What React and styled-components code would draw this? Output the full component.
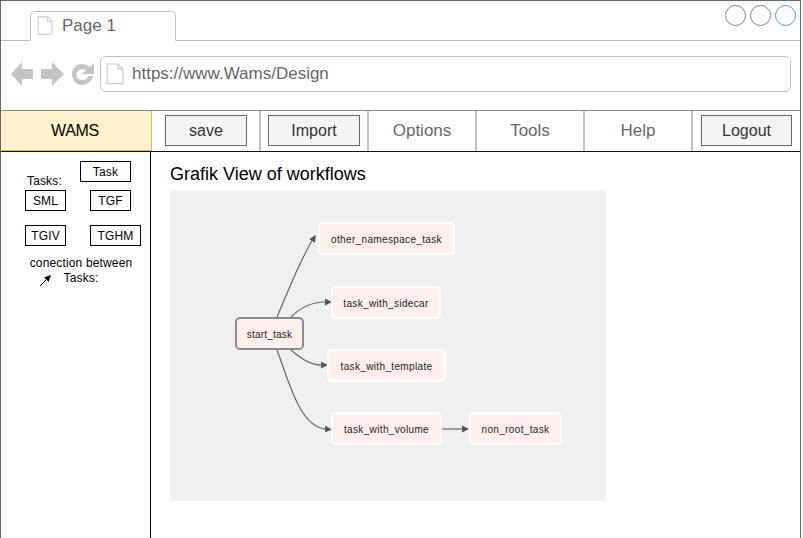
import React from 'react'
import styled, { createGlobalStyle } from 'styled-components'

const GlobalStyle = createGlobalStyle`
  html, body {
    margin: 0;
    padding: 0;
    background: #fff;
    font-family: "Liberation Sans", Arial, sans-serif;
  }
  * {
    box-sizing: border-box;
  }
`

const Frame = styled.div`
  width: 801px;
  height: 538px;
  overflow: hidden;
  display: flex;
  flex-direction: column;
  border: 1px solid #666;
  border-bottom: 0;
`

const TabRow = styled.div`
  height: 40px;
  flex: none;
  display: flex;
  align-items: flex-end;
  justify-content: space-between;
  padding-left: 29px;
  border-bottom: 1px solid #bbb;
`

const Tab = styled.div`
  width: 146px;
  height: 30px;
  margin-bottom: -1px;
  display: flex;
  align-items: center;
  gap: 9px;
  padding-left: 6px;
  font-size: 17px;
  color: #666;
  background: #fff;
  border: 1px solid #c0c0c0;
  border-bottom-color: #fff;
  border-radius: 5px 5px 0 0;
`

const WindowDots = styled.div`
  align-self: flex-start;
  display: flex;
  gap: 4px;
  padding: 4px 4px 0 0;
`

const Dot = styled.span`
  width: 21px;
  height: 21px;
  border-radius: 50%;
  border: 1px solid ${(p) => (p.$active ? '#3a9cf5' : '#808080')};
`

const AddressRow = styled.div`
  height: 69px;
  flex: none;
  display: flex;
  align-items: center;
  padding: 0 9px 3px 10px;
`

const NavIcons = styled.svg`
  width: 89px;
  height: 30px;
  flex: none;
`

const AddressBar = styled.div`
  flex: 1;
  height: 36px;
  display: flex;
  align-items: center;
  gap: 8px;
  padding-left: 5px;
  font-size: 17px;
  color: #666;
  border: 1px solid #c0c0c0;
  border-radius: 6px;
`

const Menu = styled.div`
  height: 42px;
  flex: none;
  display: flex;
  border-top: 1px solid #888;
  border-bottom: 1px solid #111;
`

const Brand = styled.div`
  width: 152px;
  margin-left: -1px;
  padding-right: 2px;
  display: flex;
  align-items: center;
  justify-content: center;
  font-size: 16px;
  letter-spacing: -0.3px;
  color: #000;
  background: #fff2cc;
  border: 1px solid #d6b656;
  border-top: 0;
`

const MenuCell = styled.div`
  width: ${(p) => p.$width}px;
  flex: none;
  display: flex;
  align-items: center;
  justify-content: ${(p) => p.$justify || 'center'};
  padding-left: ${(p) => p.$pad || 0}px;
  font-size: 17px;
  color: #666;
  border-right: ${(p) => (p.$last ? '0' : '2px solid #c0c0c0')};
`

const MenuButton = styled.div`
  width: ${(p) => p.$width}px;
  height: 31px;
  margin-top: -1px;
  display: flex;
  align-items: center;
  justify-content: center;
  font-size: 16px;
  color: #333;
  background: #f5f5f5;
  border: 1px solid #666;
`

const Body = styled.div`
  flex: 1;
  display: flex;
  min-height: 0;
  border-right: 1px solid #111;
  margin-right: -1px;
`

const Sidebar = styled.aside`
  width: 150px;
  flex: none;
  display: flex;
  flex-direction: column;
  padding: 9px 0 0 24px;
  font-size: 12px;
  letter-spacing: 0.15px;
  color: #000;
  border-right: 1px solid #000;
`

const PaletteRow = styled.div`
  display: flex;
  align-items: flex-end;
  margin-bottom: ${(p) => p.$gap || 0}px;
`

const TasksLabel = styled.span`
  width: 53px;
  margin-left: 2px;
  margin-bottom: -6px;
`

const PaletteBox = styled.div`
  width: ${(p) => p.$width || 41}px;
  height: 21px;
  margin-left: ${(p) => p.$offset || 0}px;
  display: flex;
  align-items: center;
  justify-content: center;
  border: 1px solid #000;
`

const ConnectionNote = styled.div`
  position: relative;
  width: 112px;
  margin-top: 10px;
  text-align: center;
  line-height: 15px;
`

const ConnectionArrow = styled.svg`
  position: absolute;
  left: 14px;
  top: 17px;
  width: 14px;
  height: 14px;
`

const Main = styled.main`
  flex: 1;
  padding: 12px 0 0 19px;
`

const Title = styled.h1`
  margin: 0 0 5px;
  font-size: 18px;
  line-height: 21px;
  font-weight: 400;
  color: #000;
`

const Graph = styled.div`
  position: relative;
  width: 436px;
  height: 311px;
  background: #f0f0f0;
`

const Edges = styled.svg`
  position: absolute;
  inset: 0;
  width: 100%;
  height: 100%;
`

const Node = styled.div`
  position: absolute;
  left: ${(p) => p.$x}px;
  top: ${(p) => p.$y}px;
  width: ${(p) => p.$w}px;
  height: 33px;
  padding-top: 1px;
  display: flex;
  align-items: center;
  justify-content: center;
  font-size: 10px;
  letter-spacing: ${(p) => (p.$root ? '0.2px' : '0.35px')};
  color: #222;
  background: #fff0eb;
  border: 2px solid ${(p) => (p.$root ? '#8a8a8a' : '#fff')};
  border-radius: 5px;
`

const nodes = [
  { label: 'other_namespace_task', x: 148, y: 32, w: 137 },
  { label: 'task_with_sidecar', x: 161, y: 96, w: 110 },
  { label: 'start_task', x: 65, y: 127, w: 69, root: true },
  { label: 'task_with_template', x: 157, y: 159, w: 119 },
  { label: 'task_with_volume', x: 161, y: 222, w: 111 },
  { label: 'non_root_task', x: 299, y: 222, w: 93 },
]

const edges = [
  'M107 127 C120 97 130 70 142 51',
  'M121 127 C131 117 143 112 155 112',
  'M121 160 C130 168 141 175 151 175',
  'M107 160 C120 195 130 236 155 239',
  'M272 239 L292 239',
]

const DocIcon = ({ size = 18 }) => (
  <svg width={size} height={size * 1.2} viewBox="0 0 18 22" fill="#fff" stroke="#c8c8c8" strokeWidth="1.2">
    <path d="M1 1 H12 L17 6 V21 H1 Z" />
    <path d="M12 1 V6 H17" fill="none" />
  </svg>
)

export default function App () {
  return (
    <Frame>
      <GlobalStyle />
      <TabRow>
        <Tab>
          <DocIcon size={16} />
          Page 1
        </Tab>
        <WindowDots>
          <Dot />
          <Dot />
          <Dot $active />
        </WindowDots>
      </TabRow>
      <AddressRow>
        <NavIcons viewBox="0 0 89 30" fill="#c4c4c4">
          <path d="M0 15 L11 3 V10 H22 V20 H11 V27 Z" />
          <path d="M53 15 L41 3 V10 H30 V20 H41 V27 Z" />
          <path fillRule="evenodd" d="M71 5 C74 5 77 6 79 8 L83 4 V15 H71 L75 11 C73 10 69 10 67 12 C64 15 65 21 71 21 C74 21 76 20 77 17 H82 C81 22 76 26 71 26 C65 26 61 21 61 15 C61 10 65 5 71 5 Z" />
        </NavIcons>
        <AddressBar>
          <DocIcon size={18} />
          https://www.Wams/Design
        </AddressBar>
      </AddressRow>
      <Menu>
        <Brand>WAMS</Brand>
        <MenuCell $width={109} $justify="flex-start" $pad={13}>
          <MenuButton $width={82}>save</MenuButton>
        </MenuCell>
        <MenuCell $width={108}>
          <MenuButton $width={92}>Import</MenuButton>
        </MenuCell>
        <MenuCell $width={108}>Options</MenuCell>
        <MenuCell $width={108}>Tools</MenuCell>
        <MenuCell $width={108}>Help</MenuCell>
        <MenuCell $width={107} $last>
          <MenuButton $width={91}>Logout</MenuButton>
        </MenuCell>
      </Menu>
      <Body>
        <Sidebar>
          <PaletteRow $gap={8}>
            <TasksLabel>Tasks:</TasksLabel>
            <PaletteBox $width={51}>Task</PaletteBox>
          </PaletteRow>
          <PaletteRow $gap={14}>
            <PaletteBox>SML</PaletteBox>
            <PaletteBox $offset={24}>TGF</PaletteBox>
          </PaletteRow>
          <PaletteRow>
            <PaletteBox>TGIV</PaletteBox>
            <PaletteBox $offset={24} $width={51}>TGHM</PaletteBox>
          </PaletteRow>
          <ConnectionNote>
            conection between
            <br />
            Tasks:
            <ConnectionArrow viewBox="0 0 14 14">
              <path d="M1 13 L9 5" stroke="#000" strokeWidth="1" />
              <path d="M12 2 L9.5 9 L7.5 6.5 L5 4.5 Z" fill="#000" />
            </ConnectionArrow>
          </ConnectionNote>
        </Sidebar>
        <Main>
          <Title>Grafik View of workflows</Title>
          <Graph>
            <Edges viewBox="0 0 436 311">
              <defs>
                <marker id="head" markerWidth="8" markerHeight="8" refX="0" refY="4" orient="auto" markerUnits="userSpaceOnUse">
                  <path d="M0 0.5 L7 4 L0 7.5 Z" fill="#555" />
                </marker>
              </defs>
              {edges.map((d) => (
                <path key={d} d={d} fill="none" stroke="#666" strokeWidth="1.2" markerEnd="url(#head)" />
              ))}
            </Edges>
            {nodes.map((n) => (
              <Node key={n.label} $x={n.x} $y={n.y} $w={n.w} $root={n.root}>{n.label}</Node>
            ))}
          </Graph>
        </Main>
      </Body>
    </Frame>
  )
}
